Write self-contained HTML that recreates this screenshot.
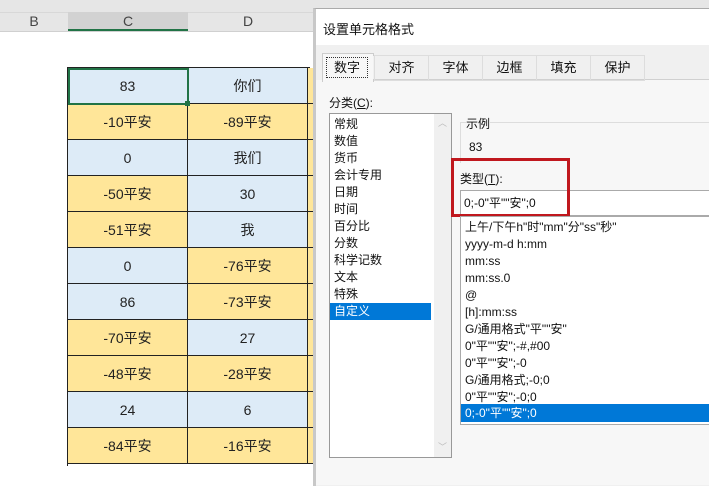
<!DOCTYPE html>
<html><head><meta charset="utf-8"><style>
body{margin:0;width:709px;height:485px;overflow:hidden;background:#fff;font-family:"Liberation Sans","Noto Sans CJK SC",sans-serif;position:relative}
.a{position:absolute}
.hdr{left:0;top:0;width:709px;height:31px;background:#e6e6e6;border-bottom:1px solid #d0d0d0}
.hl{top:12px;height:19px;font-size:14px;color:#444;text-align:center;line-height:19px}
.cell{position:absolute;width:120px;height:36px;line-height:36px;text-align:center;font-size:14px;color:#222;box-sizing:border-box;border-right:1.5px solid #222;border-bottom:1.5px solid #222}
.b{background:#ddebf7}.y{background:#ffe699}
.t{font-size:12px;color:#111}
.li{position:absolute;left:0;font-size:12px;line-height:17px;height:17px;padding-left:4px;width:calc(100% - 4px);color:#111}
</style></head><body>
<div class="a hdr"></div>
<div class="a" style="left:0;top:12px;width:709px;height:1px;background:#d8d8d8"></div>
<div class="a hl" style="left:0;width:68px">B</div>
<div class="a hl" style="left:68px;width:120px;background:#d2d2d2;border-bottom:2px solid #217346;height:17px">C</div>
<div class="a hl" style="left:188px;width:120px">D</div>
<div class="a" style="left:67px;top:67px;width:242px;height:398px;border-left:1.5px solid #222;border-top:1.5px solid #222"></div>
<div id="tb"></div>
<script>
var C=[["83","b"],["-10平安","y"],["0","b"],["-50平安","y"],["-51平安","y"],["0","b"],["86","b"],["-70平安","y"],["-48平安","y"],["24","b"],["-84平安","y"]];
var D=[["你们","b"],["-89平安","y"],["我们","b"],["30","b"],["我","b"],["-76平安","y"],["-73平安","y"],["27","b"],["-28平安","y"],["6","b"],["-16平安","y"]];
var h="";for(var i=0;i<11;i++){var y=68+i*36;
h+='<div class="cell '+C[i][1]+'" style="left:68px;top:'+y+'px">'+C[i][0]+'</div>';
h+='<div class="cell '+D[i][1]+'" style="left:188px;top:'+y+'px">'+D[i][0]+'</div>';
h+='<div class="cell y" style="left:308px;top:'+y+'px;width:6px"></div>';}
document.getElementById("tb").innerHTML=h;
</script>
<div class="a" style="left:68px;top:68px;width:117px;height:33px;border:2px solid #217346;"></div>
<div class="a" style="left:185px;top:101px;width:5px;height:5px;background:#217346"></div>
<!-- dialog -->
<div class="a" style="left:313px;top:8px;width:396px;height:477px;background:#f0f0f0;border-left:3px solid #c8c8c8;border-top:1px solid #aaa"></div>
<div class="a" style="left:316px;top:9px;width:393px;height:36px;background:#fff"></div>
<div class="a t" style="left:323px;top:19px;font-size:13px">设置单元格格式</div>
<div class="a" style="left:316px;top:80px;width:393px;height:405px;background:#f7f7f7"></div>
<div class="a" style="left:323px;top:79px;width:386px;height:1px;background:#d0d0d0"></div>
<div class="a" style="left:322px;top:53px;width:50px;height:28px;background:#f7f7f7;border:1px solid #ccc;border-bottom:none"></div>
<div class="a t" style="left:326px;top:57px;width:40px;height:19px;border:1px dotted #333;text-align:center;line-height:19px;font-size:13px">数字</div>
<div class="a" style="left:373px;top:56px;width:336px;height:23px;background:#f0f0f0"></div>
<div class="a t" style="left:374px;top:55px;width:53px;height:24px;border:1px solid #ddd;text-align:center;line-height:24px;font-size:13px">对齐</div>
<div class="a t" style="left:428px;top:55px;width:53px;height:24px;border:1px solid #ddd;text-align:center;line-height:24px;font-size:13px">字体</div>
<div class="a t" style="left:482px;top:55px;width:53px;height:24px;border:1px solid #ddd;text-align:center;line-height:24px;font-size:13px">边框</div>
<div class="a t" style="left:536px;top:55px;width:53px;height:24px;border:1px solid #ddd;text-align:center;line-height:24px;font-size:13px">填充</div>
<div class="a t" style="left:590px;top:55px;width:53px;height:24px;border:1px solid #ddd;text-align:center;line-height:24px;font-size:13px">保护</div>
<div class="a t" style="left:329px;top:94px">分类(<u>C</u>):</div>
<div class="a" style="left:329px;top:113px;width:121px;height:343px;background:#fff;border:1px solid #999">
<div style="position:absolute;right:0;top:0;width:17px;height:343px;background:#f0f0f0"></div>
<div style="position:absolute;right:4px;top:2px;font-size:9px;color:#bbb">︿</div>
<div style="position:absolute;right:4px;bottom:4px;font-size:9px;color:#bbb">﹀</div>
<div class="li" style="top:2px">常规</div><div class="li" style="top:19px">数值</div><div class="li" style="top:36px">货币</div><div class="li" style="top:53px">会计专用</div><div class="li" style="top:70px">日期</div><div class="li" style="top:87px">时间</div><div class="li" style="top:104px">百分比</div><div class="li" style="top:121px">分数</div><div class="li" style="top:138px">科学记数</div><div class="li" style="top:155px">文本</div><div class="li" style="top:172px">特殊</div>
<div class="li" style="top:189px;background:#0078d7;color:#fff;width:97px">自定义</div>
</div>
<div class="a" style="left:460px;top:122px;width:249px;height:40px;border-left:1px solid #ddd;border-top:1px solid #ddd"></div>
<div class="a t" style="left:466px;top:115px;background:#f7f7f7">示例</div>
<div class="a t" style="left:469px;top:140px">83</div>
<div class="a t" style="left:460px;top:170px">类型(<u>T</u>):</div>
<div class="a t" style="left:460px;top:190px;width:249px;height:24px;background:#fff;border:1px solid #aaa;line-height:24px;padding-left:3px">0;-0"平""安";0</div>
<div class="a" style="left:451px;top:158px;width:113px;height:53px;border:3px solid #c0181e"></div>
<div class="a" style="left:460px;top:216px;width:249px;height:207px;background:#fff;border:1px solid #aaa">
<div class="li" style="top:2px">上午/下午h"时"mm"分"ss"秒"</div>
<div class="li" style="top:19px">yyyy-m-d h:mm</div>
<div class="li" style="top:36px">mm:ss</div>
<div class="li" style="top:53px">mm:ss.0</div>
<div class="li" style="top:70px">@</div>
<div class="li" style="top:87px">[h]:mm:ss</div>
<div class="li" style="top:104px">G/通用格式"平""安"</div>
<div class="li" style="top:121px">0"平""安";-#,#00</div>
<div class="li" style="top:138px">0"平""安";-0</div>
<div class="li" style="top:155px">G/通用格式;-0;0</div>
<div class="li" style="top:172px">0"平""安";-0;0</div>
<div class="li" style="top:187px;height:18px;line-height:18px;background:#0078d7;color:#fff">0;-0"平""安";0</div>
</div>
</body></html>
